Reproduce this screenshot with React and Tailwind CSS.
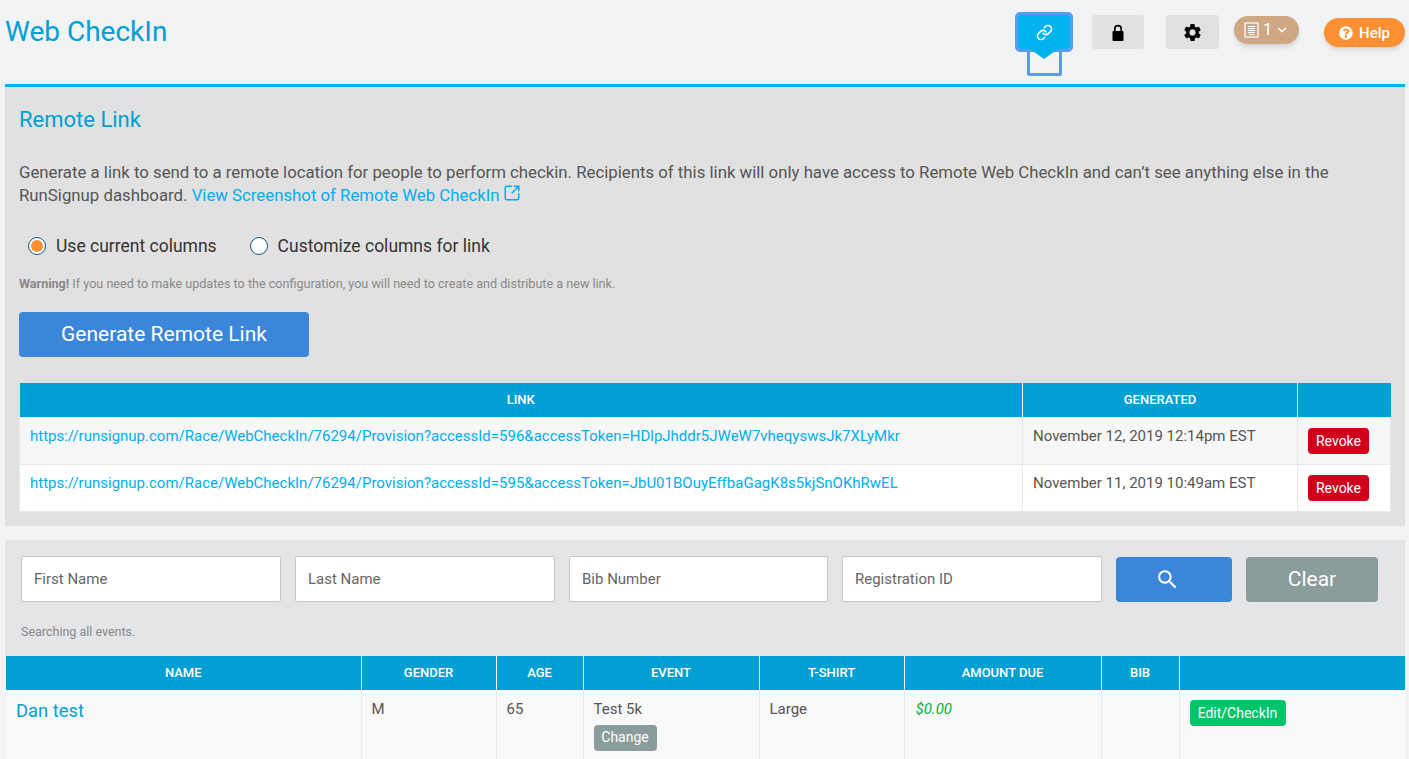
import React from 'react';
import { ChevronDown, Link, SquareArrowOutUpRight } from 'lucide-react';
import { FaQuestionCircle } from 'react-icons/fa';
import { MdSearch, MdSettings } from 'react-icons/md';

const links = [
  {
    url: 'https://runsignup.com/Race/WebCheckIn/76294/Provision?accessId=596&accessToken=HDlpJhddr5JWeW7vheqyswsJk7XLyMkr',
    date: 'November 12, 2019 12:14pm EST',
    bg: 'bg-[#f7f7f7]',
  },
  {
    url: 'https://runsignup.com/Race/WebCheckIn/76294/Provision?accessId=595&accessToken=JbU01BOuyEffbaGagK8s5kjSnOKhRwEL',
    date: 'November 11, 2019 10:49am EST',
    bg: 'bg-white',
  },
];

const fields = [
  { label: 'First Name', w: 'w-[260px]' },
  { label: 'Last Name', w: 'w-[260px]' },
  { label: 'Bib Number', w: 'w-[259px]' },
  { label: 'Registration ID', w: 'w-[260px]' },
];

const headers = [
  { label: 'NAME', w: 'w-[355px]' },
  { label: 'GENDER', w: 'w-[135px]' },
  { label: 'AGE', w: 'w-[87px]' },
  { label: 'EVENT', w: 'w-[176px]' },
  { label: 'T-SHIRT', w: 'w-[145px]' },
  { label: 'AMOUNT DUE', w: 'w-[197px]' },
  { label: 'BIB', w: 'w-[78px]' },
  { label: '', w: 'w-[226px]' },
];

const Radio = ({ checked, label }) => (
  <div className="flex items-center gap-[10px]">
    <span className="flex h-[16px] w-[16px] items-center justify-center rounded-full border border-[#0b5a78] bg-white box-content">
      {checked && <span className="h-[12px] w-[12px] rounded-full bg-[#ff8f33]" />}
    </span>
    <span className="text-[17.5px] text-[#333]">{label}</span>
  </div>
);

export default function App() {
  return (
    <div className="h-[759px] overflow-hidden bg-[#f1f3f5] font-['Roboto',sans-serif] text-[#555]">
      {/* Header */}
      <div className="flex h-[84px] items-start pl-[5px] pr-[4px]">
        <h1 className="mt-[15px] w-[162px] shrink-0 whitespace-nowrap text-[28px] leading-[34px] text-[#009fd4]">Web CheckIn</h1>
        <div className="relative ml-[851px] mt-[15px] flex h-[34px] w-[52px] shrink-0 items-center justify-center rounded-[2px] bg-[#00b2ee] outline-[3px] outline-offset-[0.5px] outline-[#5b9bf5]">
          <Link className="h-[17px] w-[17px] text-white" strokeWidth={2.25} />
          <span className="absolute left-[9px] top-[36px] h-[25px] w-[35px] rounded-b-[3px] border-[3px] border-t-0 border-[#5b9bf5]" />
          <span className="absolute left-[12px] top-[34px] h-0 w-0 border-x-[14px] border-t-[10px] border-x-transparent border-t-[#00b2ee]" />
        </div>
        <div className="ml-[22px] mt-[15px] flex h-[34px] w-[52px] shrink-0 items-center justify-center rounded-[3px] bg-[#e1e1e1]">
          <svg width="12" height="17" viewBox="0 0 12 17" className="text-black">
            <path d="M2.8 8V4.8a3.2 3.2 0 0 1 6.4 0V8" fill="none" stroke="currentColor" strokeWidth="1.7" />
            <rect x="0.5" y="7" width="11" height="10" rx="1" fill="currentColor" />
          </svg>
        </div>
        <div className="ml-[22px] mt-[15px] flex h-[34px] w-[53px] shrink-0 items-center justify-center rounded-[3px] bg-[#e1e1e1]">
          <MdSettings className="h-[21px] w-[21px] text-black" />
        </div>
        <div className="ml-[15px] mt-[16px] flex h-[28px] w-[65px] shrink-0 items-center justify-center gap-[5px] rounded-full bg-[#cda882] text-[17px] text-white shadow-md">
          <svg width="15" height="16" viewBox="0 0 15 16" fill="none" stroke="currentColor">
            <rect x="1" y="1" width="13" height="14" strokeWidth="1.2" />
            <path d="M4 4.5h7M4 6.5h7M4 8.5h7M4 10.5h7M5 12.5h5" strokeWidth="1" />
          </svg>
          <span className="-ml-[1px]">1</span>
          <ChevronDown className="-ml-[2px] h-[14px] w-[14px]" strokeWidth={2.5} />
        </div>
        <div className="ml-[25px] mt-[18px] flex h-[29px] w-[81px] shrink-0 items-center justify-center gap-[6px] rounded-full bg-[#ff8f33] pt-[1px] text-[15px] font-medium text-white shadow-md">
          <FaQuestionCircle className="h-[14px] w-[14px]" />
          <span>Help</span>
        </div>
      </div>

      {/* Remote link panel */}
      <div className="ml-[5px] mr-[4px] h-[442px] border-t-[3px] border-[#00b2ee] bg-[#e1e1e1] px-[14px]">
        <h2 className="pt-[19px] text-[22px] leading-[28px] text-[#009fd4]">Remote Link</h2>
        <p className="mt-[27px] text-[16.8px] leading-[23px] text-[#555]">
          Generate a link to send to a remote location for people to perform checkin. Recipients of this link will only have access to Remote Web CheckIn and can’t see anything else in the RunSignup dashboard.{' '}
          <a className="text-[#00aeef]">
            View Screenshot of Remote Web CheckIn
            <SquareArrowOutUpRight className="ml-[3px] inline h-[18px] w-[18px] -translate-y-[3px] align-[-4px]" strokeWidth={2} />
          </a>
        </p>
        <div className="mt-[26px] flex items-center gap-[33px] pl-[9px]">
          <Radio checked label="Use current columns" />
          <Radio label="Customize columns for link" />
        </div>
        <p className="mt-[17px] text-[12.6px] leading-[16px] text-[#888]">
          <strong className="font-bold">Warning!</strong> If you need to make updates to the configuration, you will need to create and distribute a new link.
        </p>
        <button className="mt-[20px] block h-[45px] w-[290px] rounded-[4px] bg-[#3b86d9] text-[21px] text-white">
          Generate Remote Link
        </button>
        <table className="mt-[26px] w-[1372px] table-fixed border-collapse text-[15px]">
          <thead>
            <tr className="h-[34px] bg-[#009fd4] text-[13px] text-white">
              <th className="w-[1003px] font-medium">LINK</th>
              <th className="w-[275px] border-l border-white font-medium">GENERATED</th>
              <th className="border-l border-white font-medium" />
            </tr>
          </thead>
          <tbody>
            {links.map((link) => (
              <tr key={link.url} className={`h-[47px] border border-[#e9e9e9] ${link.bg}`}>
                <td className="truncate px-[10px] pb-[11px] pt-[1px] text-[#00aeef]">{link.url}</td>
                <td className="border-l border-[#e9e9e9] px-[10px] pb-[11px] pt-[1px] text-[#555]">{link.date}</td>
                <td className="border-l border-[#e9e9e9] px-[10px] pt-[1px]">
                  <span className="flex h-[26px] w-[61px] items-center justify-center rounded-[4px] bg-[#d0021b] text-[14px] text-white">Revoke</span>
                </td>
              </tr>
            ))}
          </tbody>
        </table>
      </div>

      {/* Search panel */}
      <div className="ml-[5px] mr-[4px] mt-[14px] h-[116px] bg-[#e4e5e7] px-[16px] pt-[16px]">
        <div className="flex items-center gap-[14px]">
          {fields.map((field) => (
            <div
              key={field.label}
              className={`flex h-[46px] items-center rounded-[2px] border border-[#c6c6c6] bg-white px-[12px] text-[15px] text-[#666] ${field.w}`}
            >
              {field.label}
            </div>
          ))}
          <button className="flex h-[45px] w-[116px] items-center justify-center rounded-[4px] bg-[#3b86d9] pr-[13px] text-white">
            <MdSearch className="h-[25px] w-[25px]" />
          </button>
          <button className="h-[45px] w-[132px] rounded-[4px] bg-[#8a9c9c] pt-[1px] text-[21px] text-white">Clear</button>
        </div>
        <p className="mt-[22px] text-[12.5px] leading-[16px] text-[#888]">Searching all events.</p>
      </div>

      {/* Results table */}
      <table className="ml-[6px] w-[1399px] table-fixed border-collapse text-[15px]">
        <thead>
          <tr className="h-[34px] bg-[#009fd4] text-[13px] text-white">
            {headers.map((h, i) => (
              <th key={i} className={`font-medium ${h.w} ${i > 0 ? 'border-l border-white' : ''}`}>{h.label}</th>
            ))}
          </tr>
        </thead>
        <tbody>
          <tr className="h-[80px] bg-[#f9f9f9] align-top">
            <td className="px-[10px] pt-[7px] text-[18.4px] text-[#009fd4]">Dan test</td>
            <td className="border-l border-[#eaeaea] px-[10px] pt-[8px]">M</td>
            <td className="border-l border-[#eaeaea] px-[10px] pt-[8px]">65</td>
            <td className="border-l border-[#eaeaea] px-[10px] pt-[8px]">
              <div>Test 5k</div>
              <span className="mt-[4px] flex h-[26px] w-[63px] items-center justify-center rounded-[4px] bg-[#8a9c9c] text-[14px] text-white">Change</span>
            </td>
            <td className="border-l border-[#eaeaea] px-[10px] pt-[8px]">Large</td>
            <td className="border-l border-[#eaeaea] px-[11px] pt-[8px] italic text-[#00b140]">$0.00</td>
            <td className="border-l border-[#eaeaea]" />
            <td className="border-l border-[#eaeaea] px-[10px] pt-[10px]">
              <span className="flex h-[26px] w-[96px] items-center justify-center rounded-[4px] bg-[#00c46a] text-[14px] text-white">Edit/CheckIn</span>
            </td>
          </tr>
        </tbody>
      </table>
    </div>
  );
}
